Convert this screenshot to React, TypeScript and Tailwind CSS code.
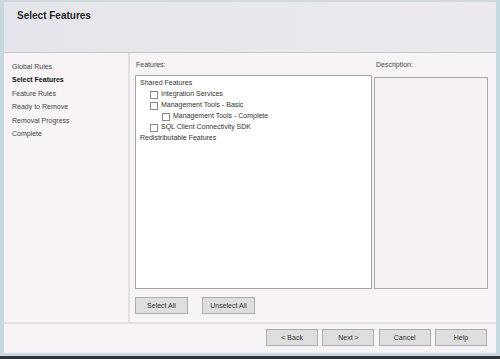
import React from "react";

const NAV = ["Global Rules", "Select Features", "Feature Rules", "Ready to Remove", "Removal Progress", "Complete"];

type Item = { label: string; indent: number; check: boolean };

const TREE: Item[] = [
  { label: "Shared Features", indent: 0, check: false },
  { label: "Integration Services", indent: 1, check: true },
  { label: "Management Tools - Basic", indent: 1, check: true },
  { label: "Management Tools - Complete", indent: 2, check: true },
  { label: "SQL Client Connectivity SDK", indent: 1, check: true },
  { label: "Redistributable Features", indent: 0, check: false },
];

function Btn({ children }: { children: React.ReactNode }) {
  return (
    <button className="w-[53px] h-[17px] bg-[#dedede] border border-[#acacac] text-[7px] text-[#333] leading-none">
      {children}
    </button>
  );
}

function FootBtn({ children }: { children: React.ReactNode }) {
  return (
    <button className="w-[52px] h-[17px] bg-[#dedede] border border-[#acacac] text-[7px] text-[#333] leading-none">
      {children}
    </button>
  );
}

export default function App() {
  return (
    <div
      className="w-[500px] h-[359px] bg-[#c5d9e1] flex flex-col text-[#3a3a3a] overflow-hidden"
      style={{ fontFamily: '"Liberation Sans", Arial, sans-serif' }}
    >
      <div className="mx-[4px] flex-1 flex flex-col bg-[#f7f3f7]">
        {/* Header */}
        <div className="h-[53px] shrink-0 bg-gradient-to-r from-[#e4e5ea] via-[#e9e8ed] to-[#eceaef] border-t-2 border-[#cfd9de] border-b border-b-[#c9c7cc] pl-[13px] pt-[8px]">
          <h1 className="text-[10px] font-bold text-[#1f1f1f] leading-[12px]">Select Features</h1>
        </div>

        {/* Body */}
        <div className="h-[269px] shrink-0 flex">
          <div className="w-[126px] shrink-0 border-r-2 border-[#e3dfe3] pl-[8px] pt-[7px] flex flex-col">
            {NAV.map(n => (
              <div
                key={n}
                className={`h-[13.4px] leading-[13.4px] text-[7px] ${n === "Select Features" ? "font-bold text-[#111]" : "text-[#444]"}`}
              >
                {n}
              </div>
            ))}
          </div>

          <div className="flex-1 flex flex-col pl-[5px] pr-[8px] pt-[7px] pb-[8px]">
            <div className="flex gap-[2px] h-[229px]">
              <div className="w-[237px] flex flex-col">
                <div className="h-[15px] text-[7px] leading-[10px] pl-[1px] text-[#444]">Features:</div>
                <div className="h-[214px] bg-white border border-[#a4a4a4] pl-[4px] pt-[2px]">
                  {TREE.map(t => (
                    <div
                      key={t.label}
                      className={`h-[11px] flex items-center text-[7px] text-[#333] ${t.indent === 2 ? "pl-[22px]" : t.indent === 1 ? "pl-[10px]" : ""}`}
                    >
                      {t.check && <span className="w-[8px] h-[8px] border border-[#8a8a8a] bg-white mr-[3px] shrink-0" />}
                      {t.label}
                    </div>
                  ))}
                </div>
              </div>
              <div className="flex-1 flex flex-col">
                <div className="h-[17px] text-[7px] leading-[10px] pl-[2px] text-[#444]">Description:</div>
                <div className="h-[212px] bg-[#f5f1f5] border border-[#a9a7a9]" />
              </div>
            </div>
            <div className="flex gap-[14px] mt-[8px]">
              <Btn>Select All</Btn>
              <Btn>Unselect All</Btn>
            </div>
          </div>
        </div>

        {/* Footer */}
        <div className="flex-1 border-t-2 border-[#e3dfe3] flex justify-end items-start gap-[4.3px] pt-[5px] pr-[9px]">
          <FootBtn>&lt; Back</FootBtn>
          <FootBtn>Next &gt;</FootBtn>
          <FootBtn>Cancel</FootBtn>
          <FootBtn>Help</FootBtn>
        </div>
      </div>
      <div className="h-[3px] bg-[#c9d9df] shrink-0" />
      <div className="h-[3px] bg-[#2f3437] shrink-0" />
    </div>
  );
}
